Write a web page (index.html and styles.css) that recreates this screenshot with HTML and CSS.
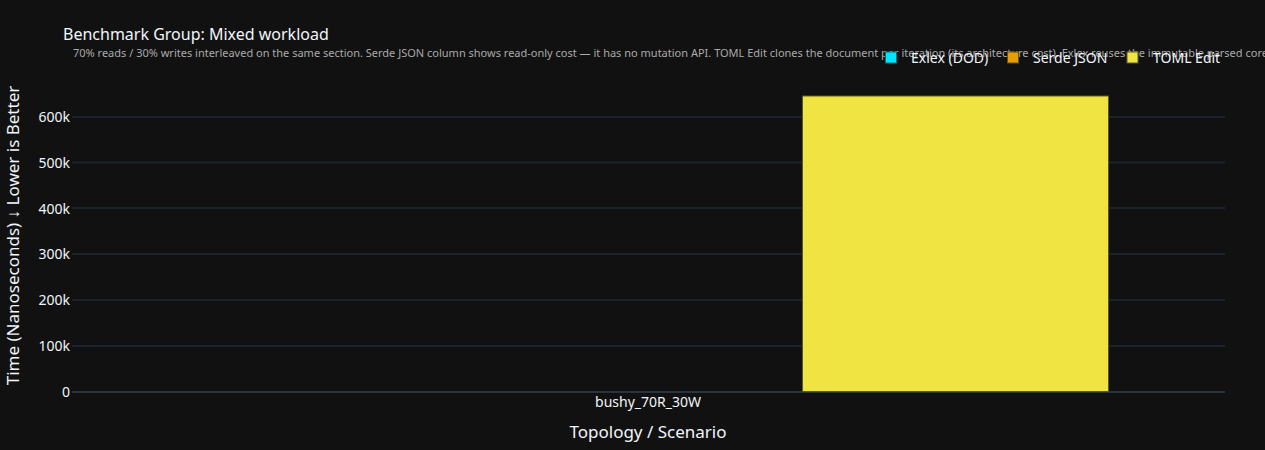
FILE: index.html
```html
<!DOCTYPE html>
<html lang="en">
<head>
<meta charset="utf-8">
<title>Benchmark Group: Mixed workload</title>
<link rel="stylesheet" href="styles.css">
</head>
<body>
<svg class="chart" width="1265" height="450" viewBox="0 0 1265 450" xmlns="http://www.w3.org/2000/svg">
  <g class="grid">
    <line x1="72" x2="1225" y1="346" y2="346"/>
    <line x1="72" x2="1225" y1="300" y2="300"/>
    <line x1="72" x2="1225" y1="254" y2="254"/>
    <line x1="72" x2="1225" y1="208" y2="208"/>
    <line x1="72" x2="1225" y1="162.5" y2="162.5"/>
    <line x1="72" x2="1225" y1="117" y2="117"/>
  </g>
  <line class="zero" x1="72" x2="1225" y1="392" y2="392"/>
  <rect class="bar" x="802.5" y="96" width="306" height="295.5"/>
  <g class="ticks">
    <text x="70" y="397">0</text>
    <text x="70" y="351">100k</text>
    <text x="70" y="305">200k</text>
    <text x="70" y="259">300k</text>
    <text x="70" y="214">400k</text>
    <text x="70" y="168">500k</text>
    <text x="70" y="122">600k</text>
  </g>
  <text class="xtick" x="648" y="407">bushy_70R_30W</text>
  <text class="xtitle" x="648" y="438">Topology / Scenario</text>
  <text class="ytitle" transform="translate(19 235.5) rotate(-90)">Time (Nanoseconds) ↓ Lower is Better</text>
  <text class="title" x="63" y="40">Benchmark Group: Mixed workload</text>
  <text class="subtitle" x="73" y="57">70% reads / 30% writes interleaved on the same section. Serde JSON column shows read-only cost — it has no mutation API. TOML Edit clones the document per iteration (its architecture cost). Exlex reuses the immutable parsed core.</text>
  <g class="legend">
    <rect class="swatch swatch-exlex" x="885.5" y="52" width="11" height="11"/>
    <text x="911" y="63">Exlex (DOD)</text>
    <rect class="swatch swatch-serde" x="1007.5" y="52" width="11" height="11"/>
    <text x="1033" y="63">Serde JSON</text>
    <rect class="swatch swatch-toml" x="1127" y="52" width="11" height="11"/>
    <text x="1153" y="63">TOML Edit</text>
  </g>
</svg>
</body>
</html>
```

FILE: styles.css
```css
html, body {
  margin: 0;
  padding: 0;
  background: #111111;
  overflow: hidden;
}

.chart {
  display: block;
  font-family: "Noto Sans", sans-serif;
  background: #111111;
}

.grid line {
  stroke: #1c232d;
  stroke-width: 2;
}

.zero {
  stroke: #2a3440;
  stroke-width: 2;
}

.bar {
  fill: #f0e442;
  stroke: #5c5a2a;
  stroke-width: 1;
}

.ticks text {
  fill: #f2f5fa;
  font-size: 14px;
  text-anchor: end;
}

.xtick {
  fill: #f2f5fa;
  font-size: 14px;
  text-anchor: middle;
}

.xtitle {
  fill: #f2f5fa;
  font-size: 17px;
  text-anchor: middle;
}

.ytitle {
  fill: #f2f5fa;
  font-size: 17px;
  text-anchor: middle;
}

.title {
  fill: #f2f5fa;
  font-size: 16px;
}

.subtitle {
  fill: #aaaaaa;
  font-size: 11px;
}

.legend text {
  fill: #f2f5fa;
  font-size: 14px;
}

.swatch {
  stroke-width: 1;
}

.swatch-exlex {
  fill: #00e5ff;
  stroke: #0a6f7c;
}

.swatch-serde {
  fill: #e69f00;
  stroke: #6b4c08;
}

.swatch-toml {
  fill: #f0e442;
  stroke: #5c5a2a;
}
```
